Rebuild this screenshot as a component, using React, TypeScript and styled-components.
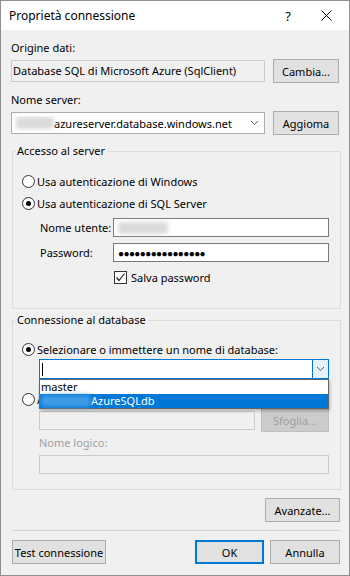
import styled, { createGlobalStyle } from "styled-components";

const GlobalStyle = createGlobalStyle`
  html, body {
    margin: 0;
    padding: 0;
    background: #ffffff;
  }
  body {
    font-family: "Noto Sans", "Liberation Sans", sans-serif;
    font-size: 11px;
    color: #000;
  }
  * { box-sizing: border-box; }
`;

const Dialog = styled.div`
  width: 350px;
  height: 576px;
  border: 1px solid #8f8f8f;
  background: #f0f0f0;
  display: flex;
  flex-direction: column;
`;

const TitleBar = styled.div`
  height: 29px;
  background: #ffffff;
  display: flex;
  align-items: center;
  padding: 0 4px 0 8px;
  font-size: 12px;
`;

const TitleText = styled.span`
  flex: 1;
`;

const TitleIcon = styled.div`
  width: 38px;
  height: 29px;
  display: flex;
  align-items: center;
  justify-content: center;
  font-size: 13px;
`;

const Body = styled.div`
  flex: 1;
  display: flex;
  flex-direction: column;
  padding: 10px 9px 0 10px;
`;

const Label = styled.div<{ $disabled?: boolean }>`
  height: 16px;
  line-height: 16px;
  color: ${(p) => (p.$disabled ? "#a0a0a0" : "#000")};
`;

const FieldRow = styled.div<{ $top: number }>`
  display: flex;
  align-items: center;
  gap: 8px;
  margin-top: ${(p) => p.$top}px;
`;

const ReadField = styled.div`
  width: 254px;
  height: 22px;
  border: 1px solid #cccccc;
  background: #f0f0f0;
  line-height: 20px;
  padding-left: 1px;
  white-space: nowrap;
  overflow: hidden;
`;

const Combo = styled.div<{ $width: number; $focus?: boolean }>`
  position: relative;
  width: ${(p) => p.$width}px;
  height: ${(p) => (p.$focus ? 20 : 22)}px;
  border: 1px solid ${(p) => (p.$focus ? "#0078d7" : "#adadad")};
  background: #ffffff;
  display: flex;
  align-items: center;
`;

const ComboText = styled.div`
  flex: 1;
  display: flex;
  align-items: center;
  padding-left: 4px;
  white-space: nowrap;
  overflow: hidden;
`;

const Blur = styled.span<{ $width: number; $color: string }>`
  display: inline-block;
  width: ${(p) => p.$width}px;
  height: 12px;
  background: ${(p) => p.$color};
  filter: blur(2px);
  border-radius: 3px;
`;

const ComboArrow = styled.div<{ $focus?: boolean }>`
  width: ${(p) => (p.$focus ? 16 : 20)}px;
  align-self: stretch;
  display: flex;
  align-items: center;
  justify-content: center;
  background: ${(p) => (p.$focus ? "#e5f1fb" : "transparent")};
  border-left: ${(p) => (p.$focus ? "1px solid #0078d7" : "none")};
`;

const Button = styled.button<{ $width: number; $height?: number; $default?: boolean; $disabled?: boolean }>`
  width: ${(p) => p.$width}px;
  height: ${(p) => p.$height ?? 24}px;
  font: inherit;
  color: ${(p) => (p.$disabled ? "#a0a0a0" : "#000")};
  background: ${(p) => (p.$disabled ? "#cccccc" : "#e1e1e1")};
  border: 1px solid ${(p) => (p.$default ? "#0078d7" : p.$disabled ? "#bfbfbf" : "#adadad")};
  box-shadow: ${(p) => (p.$default ? "inset 0 0 0 1px #0078d7" : "none")};
  padding: 0;
`;

const Group = styled.fieldset<{ $top: number }>`
  margin: ${(p) => p.$top}px 0 0 1px;
  padding: 0;
  width: 329px;
  border: 1px solid #dcdcdc;
`;

const Legend = styled.legend`
  margin-left: 2px;
  padding: 0 2px;
  height: 16px;
  line-height: 16px;
`;

const GroupInner = styled.div<{ $pt: number; $pb: number }>`
  display: flex;
  flex-direction: column;
  padding: ${(p) => p.$pt}px 0 ${(p) => p.$pb}px 9px;
`;

const RadioRow = styled.label<{ $top?: number }>`
  display: flex;
  align-items: center;
  height: 16px;
  margin-top: ${(p) => p.$top ?? 0}px;
  gap: 2px;
  white-space: nowrap;
`;

const RadioDot = styled.span<{ $checked?: boolean }>`
  width: 13px;
  height: 13px;
  border-radius: 50%;
  border: 1px solid #333;
  background: #fff;
  display: flex;
  align-items: center;
  justify-content: center;
  &::after {
    content: "";
    width: 5px;
    height: 5px;
    border-radius: 50%;
    background: ${(p) => (p.$checked ? "#000" : "transparent")};
  }
`;

const FormRow = styled.div<{ $top: number }>`
  display: flex;
  align-items: center;
  margin-top: ${(p) => p.$top}px;
  padding-left: 18px;
`;

const FormLabel = styled.span`
  width: 73px;
`;

const TextBox = styled.div<{ $width: number; $disabled?: boolean }>`
  width: ${(p) => p.$width}px;
  height: 19px;
  border: 1px solid ${(p) => (p.$disabled ? "#cccccc" : "#7a7a7a")};
  background: ${(p) => (p.$disabled ? "#f0f0f0" : "#fff")};
  display: flex;
  align-items: center;
  padding-left: 4px;
`;

const Dots = styled.span`
  font-size: 10px;
  letter-spacing: -0.6px;
  line-height: 1;
`;

const CheckRow = styled.label`
  display: flex;
  align-items: center;
  gap: 4px;
  margin: 7px 0 0 92px;
  height: 16px;
`;

const CheckBox = styled.span`
  width: 13px;
  height: 13px;
  border: 1px solid #333;
  background: #fff;
  display: flex;
  align-items: center;
  justify-content: center;
`;

const DbCombo = styled.div`
  position: relative;
  margin: 2px 0 0 17px;
`;

const Caret = styled.span`
  width: 1px;
  height: 13px;
  background: #000;
`;

const DropList = styled.div`
  position: absolute;
  left: 0;
  top: 20px;
  width: 290px;
  background: #fff;
  border: 1px solid #646464;
  box-shadow: 1px 2px 3px rgba(0, 0, 0, 0.25);
  z-index: 2;
`;

const DropItem = styled.div<{ $selected?: boolean }>`
  height: 14px;
  line-height: 14px;
  padding-left: 1px;
  display: flex;
  align-items: center;
  background: ${(p) => (p.$selected ? "#0078d7" : "#fff")};
  color: ${(p) => (p.$selected ? "#fff" : "#000")};
`;

const SubBlock = styled.div`
  display: flex;
  flex-direction: column;
  padding-left: 17px;
`;

const AdvancedRow = styled.div`
  display: flex;
  justify-content: flex-end;
  margin-top: 8px;
`;

const Separator = styled.div`
  height: 1px;
  background: #d5d5d5;
  margin: 8px 0 0 1px;
  width: 329px;
`;

const Footer = styled.div`
  display: flex;
  align-items: center;
  margin-top: 9px;
  padding-left: 1px;
`;

const Spacer = styled.div`
  flex: 1;
`;

const Chevron = () => (
  <svg width="9" height="6" viewBox="0 0 9 6">
    <path d="M1 1 L4.5 4.5 L8 1" fill="none" stroke="#606060" strokeWidth="1" />
  </svg>
);

export default function App() {
  return (
    <Dialog>
      <GlobalStyle />
      <TitleBar>
        <TitleText>Proprietà connessione</TitleText>
        <TitleIcon>?</TitleIcon>
        <TitleIcon>
          <svg width="11" height="11" viewBox="0 0 11 11">
            <path d="M0.5 0.5 L10.5 10.5 M10.5 0.5 L0.5 10.5" stroke="#000" strokeWidth="1" />
          </svg>
        </TitleIcon>
      </TitleBar>
      <Body>
        <Label>Origine dati:</Label>
        <FieldRow $top={3}>
          <ReadField>Database SQL di Microsoft Azure (SqlClient)</ReadField>
          <Button $width={66}>Cambia...</Button>
        </FieldRow>
        <Label style={{ marginTop: 9 }}>Nome server:</Label>
        <FieldRow $top={3}>
          <Combo $width={254}>
            <ComboText>
              <Blur $width={38} $color="#dadada" />
              <span>azureserver.database.windows.net</span>
            </ComboText>
            <ComboArrow>
              <Chevron />
            </ComboArrow>
          </Combo>
          <Button $width={66}>Aggioma</Button>
        </FieldRow>

        <Group $top={8}>
          <Legend>Accesso al server</Legend>
          <GroupInner $pt={14} $pb={23}>
            <RadioRow>
              <RadioDot />
              Usa autenticazione di Windows
            </RadioRow>
            <RadioRow $top={6}>
              <RadioDot $checked />
              Usa autenticazione di SQL Server
            </RadioRow>
            <FormRow $top={7}>
              <FormLabel>Nome utente:</FormLabel>
              <TextBox $width={216}>
                <Blur $width={50} $color="#dadada" />
              </TextBox>
            </FormRow>
            <FormRow $top={6}>
              <FormLabel>Password:</FormLabel>
              <TextBox $width={216}>
                <Dots>●●●●●●●●●●●●●●●●</Dots>
              </TextBox>
            </FormRow>
            <CheckRow>
              <CheckBox>
                <svg width="11" height="11" viewBox="0 0 11 11">
                  <path d="M1.5 5.5 L4 8.5 L9.5 1.5" fill="none" stroke="#222" strokeWidth="1.2" />
                </svg>
              </CheckBox>
              Salva password
            </CheckRow>
          </GroupInner>
        </Group>

        <Group $top={3}>
          <Legend>Connessione al database</Legend>
          <GroupInner $pt={13} $pb={15}>
            <RadioRow>
              <RadioDot $checked />
              Selezionare o immettere un nome di database:
            </RadioRow>
            <DbCombo>
              <Combo $width={290} $focus>
                <ComboText style={{ paddingLeft: 2 }}>
                  <Caret />
                </ComboText>
                <ComboArrow $focus>
                  <Chevron />
                </ComboArrow>
              </Combo>
              <DropList>
                <DropItem>master</DropItem>
                <DropItem $selected>
                  <Blur $width={50} $color="#3f9be6" />
                  AzureSQLdb
                </DropItem>
              </DropList>
            </DbCombo>
            <RadioRow $top={12}>
              <RadioDot />A
            </RadioRow>
            <SubBlock>
              <FieldRow $top={2}>
                <TextBox $width={216} $disabled />
                <Button $width={68} $height={23} $disabled style={{ marginLeft: -2 }}>
                  Sfoglia...
                </Button>
              </FieldRow>
              <Label $disabled style={{ marginTop: 3 }}>Nome logico:</Label>
              <TextBox $width={290} $disabled style={{ marginTop: 4 }} />
            </SubBlock>
          </GroupInner>
        </Group>

        <AdvancedRow>
          <Button $width={75}>Avanzate...</Button>
        </AdvancedRow>
        <Separator />
        <Footer>
          <Button $width={94}>Test connessione</Button>
          <Spacer />
          <Button $width={69} $default>OK</Button>
          <Button $width={70} style={{ marginLeft: 6 }}>Annulla</Button>
        </Footer>
      </Body>
    </Dialog>
  );
}
